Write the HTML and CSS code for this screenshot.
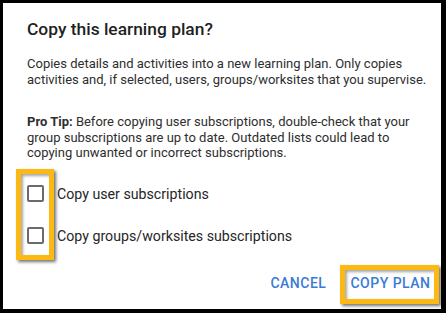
FILE: index.html
```html
<!DOCTYPE html>
<html lang="en">
<head>
<meta charset="utf-8">
<title>Copy this learning plan?</title>
<link rel="stylesheet" href="styles.css">
</head>
<body>
<div class="dialog">
  <h1 class="title">Copy this learning plan?</h1>
  <p class="text text-first">Copies details and activities into a new learning plan. Only copies activities and, if selected, users, groups/worksites that you supervise.</p>
  <p class="text text-tip"><strong class="tip-label">Pro Tip:</strong><span class="tip-body"> Before copying user subscriptions, double-check that your group subscriptions are up to date. Outdated lists could lead to copying unwanted or incorrect subscriptions.</span></p>
  <div class="options">
    <label class="option"><span class="box"></span><span class="label">Copy user subscriptions</span></label>
    <label class="option"><span class="box"></span><span class="label">Copy groups/worksites subscriptions</span></label>
  </div>
  <div class="actions">
    <button class="btn">Cancel</button>
    <button class="btn">Copy plan</button>
  </div>
  <span class="highlight highlight-boxes"></span>
  <span class="highlight highlight-copy"></span>
</div>
</body>
</html>
```
FILE: styles.css
```css
html, body {
  margin: 0;
  padding: 0;
  background: #000;
}
body {
  width: 446px;
  height: 313px;
  overflow: hidden;
  font-family: Roboto, "Liberation Sans", sans-serif;
}
.dialog {
  position: relative;
  box-sizing: border-box;
  margin: 3px 5px 0 3px;
  width: 438px;
  height: 306px;
  background: #fff;
  padding: 16px 0 0 24px;
}
.title {
  margin: 0;
  font-size: 17.4px;
  line-height: 20px;
  font-weight: 500;
  color: #1f1f1f;
}
.text {
  margin: 0;
  font-size: 13px;
  line-height: 15.6px;
  color: #2e2e2e;
  width: 400px;
}
.tip-label {
  font-weight: 700;
}
.text-first {
  margin-top: 17px;
}
.text-tip {
  margin-top: 27px;
}
.options {
  margin-top: 21px;
  display: flex;
  flex-direction: column;
  gap: 18px;
}
.option {
  display: flex;
  align-items: center;
  height: 24px;
  gap: 13px;
}
.box {
  box-sizing: border-box;
  width: 17px;
  height: 17px;
  border: 2px solid #6a6a6a;
  border-radius: 2px;
}
.label {
  font-size: 14.2px;
  color: #262626;
}
.actions {
  margin-top: 17px;
  display: flex;
  justify-content: flex-end;
  gap: 8px;
  padding-right: 2.5px;
}
.btn {
  background: none;
  border: 0;
  height: 36px;
  padding: 0 8px;
  font-family: Roboto, "Liberation Sans", sans-serif;
  font-size: 14px;
  font-weight: 500;
  letter-spacing: 0.5px;
  text-transform: uppercase;
  color: #3a7bd5;
}
.highlight {
  position: absolute;
  box-sizing: border-box;
  border: 5px solid #fdb913;
  box-shadow: 2px 2px 3px rgba(0, 0, 0, 0.55), inset 2px 2px 3px rgba(0, 0, 0, 0.35);
}
.highlight-boxes {
  left: 13px;
  top: 166px;
  width: 38px;
  height: 91px;
}
.highlight-copy {
  left: 337px;
  top: 262px;
  width: 99px;
  height: 39px;
}
```
